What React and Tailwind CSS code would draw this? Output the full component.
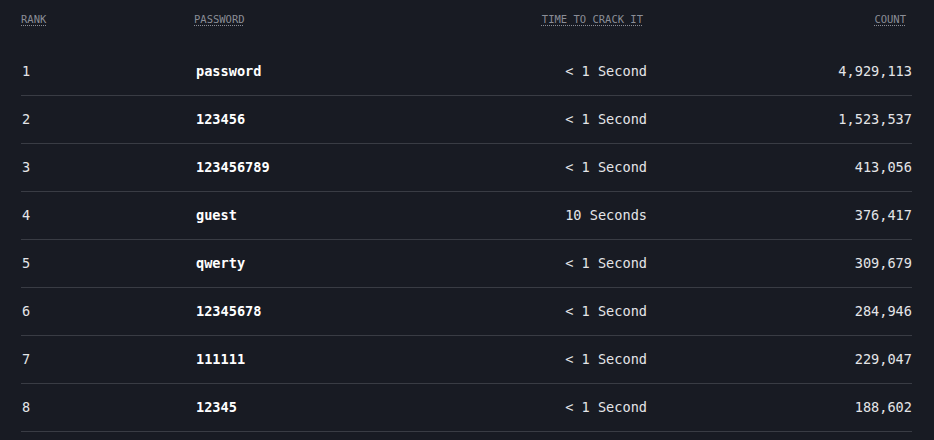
const rows = [
  { rank: 1, password: 'password', time: '< 1 Second', count: '4,929,113' },
  { rank: 2, password: '123456', time: '< 1 Second', count: '1,523,537' },
  { rank: 3, password: '123456789', time: '< 1 Second', count: '413,056' },
  { rank: 4, password: 'guest', time: '10 Seconds', count: '376,417' },
  { rank: 5, password: 'qwerty', time: '< 1 Second', count: '309,679' },
  { rank: 6, password: '12345678', time: '< 1 Second', count: '284,946' },
  { rank: 7, password: '111111', time: '< 1 Second', count: '229,047' },
  { rank: 8, password: '12345', time: '< 1 Second', count: '188,602' },
];

export default function App() {
  return (
    <div className="min-h-screen bg-[#181b23] px-[21px] font-['DejaVu_Sans_Mono','Liberation_Mono',monospace] text-[#e4e5e8]">
      <table className="w-[891px] border-collapse">
        <thead>
          <tr className="h-[47px] text-[10.5px] text-[#8a8d96]">
            <th className="w-[175px] pb-[8px] text-left font-normal">
              <span className="underline decoration-dotted underline-offset-2">RANK</span>
            </th>
            <th className="pb-[8px] pl-[-2px] text-left font-normal">
              <span className="-ml-[2px] underline decoration-dotted underline-offset-2">PASSWORD</span>
            </th>
            <th className="w-[200px] pb-[8px] pr-[4px] text-right font-normal">
              <span className="underline decoration-dotted underline-offset-2">TIME TO CRACK IT</span>
            </th>
            <th className="w-[265px] pb-[8px] pr-[6px] text-right font-normal">
              <span className="underline decoration-dotted underline-offset-2">COUNT</span>
            </th>
          </tr>
        </thead>
        <tbody className="text-[13.6px]">
          {rows.map((r) => (
            <tr key={r.rank} className="h-[48px] border-b border-[#393c44]">
              <td className="pl-px">{r.rank}</td>
              <td className="font-bold text-white">{r.password}</td>
              <td className="text-right">{r.time}</td>
              <td className="text-right">{r.count}</td>
            </tr>
          ))}
        </tbody>
      </table>
    </div>
  );
}
